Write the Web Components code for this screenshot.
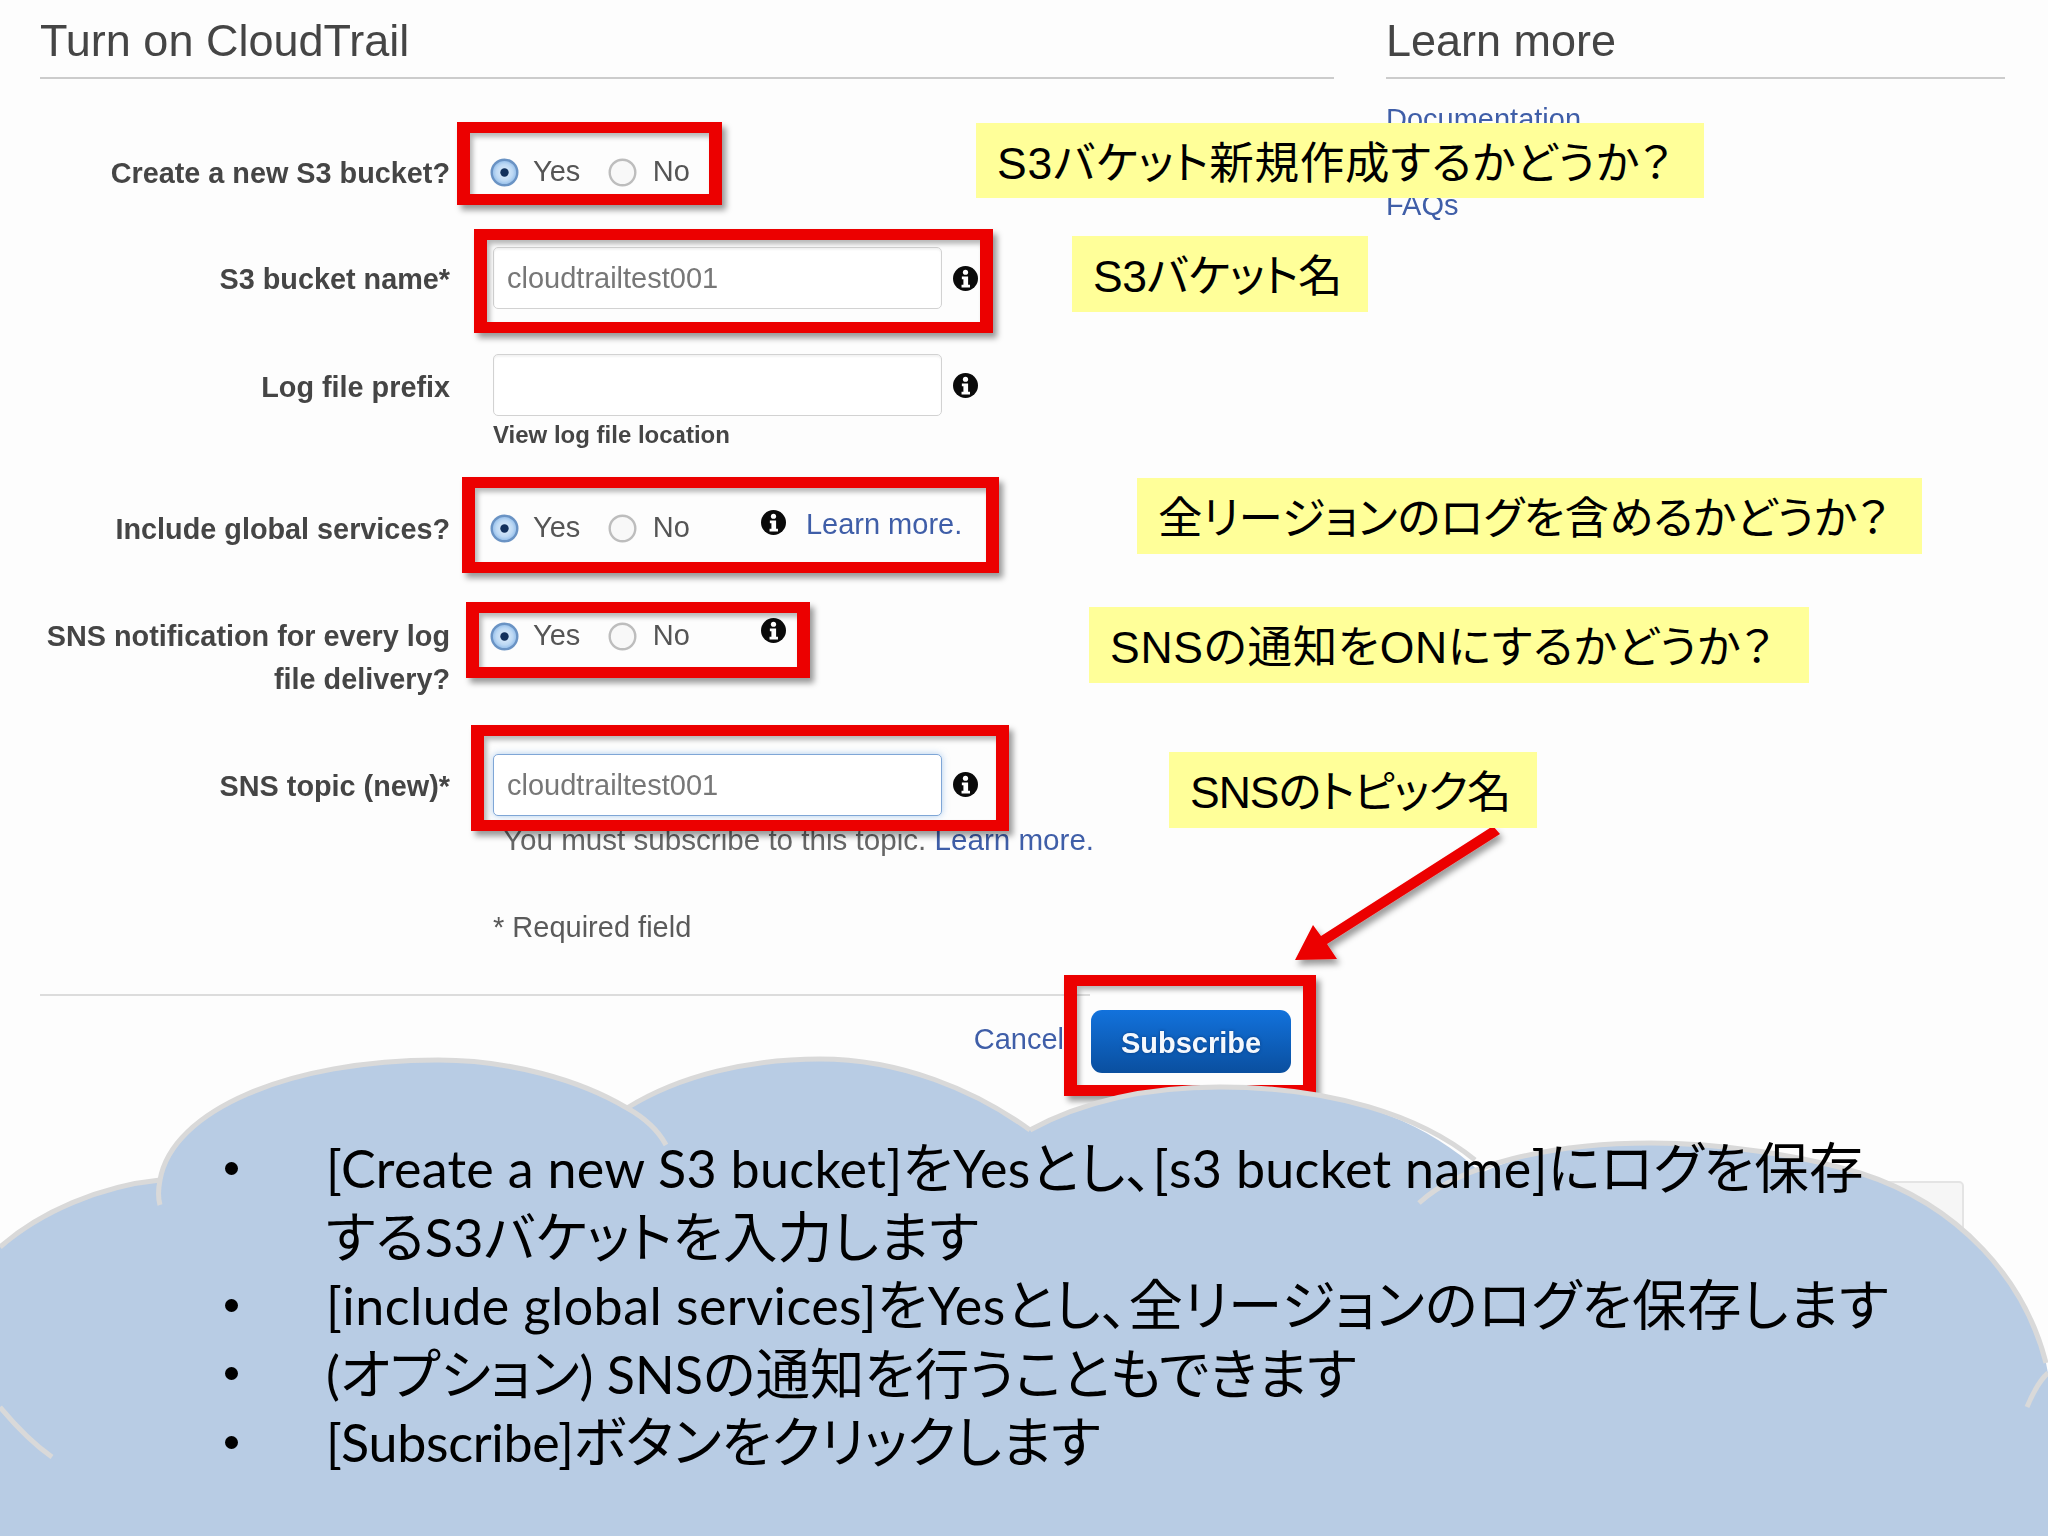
<!DOCTYPE html>
<html lang="ja">
<head>
<meta charset="utf-8">
<title>Turn on CloudTrail</title>
<style>
  html, body { margin: 0; padding: 0; background: #fdfdfd; }
</style>
</head>
<body>
<slide-page>
  <ct-panel slot="main" heading="Turn on CloudTrail">
    <ct-field label="Create a new S3 bucket?" style="margin-top:72px">
      <ct-radios></ct-radios>
    </ct-field>
    <ct-field label="S3 bucket name*" label-pad="9.5" style="margin-top:53px">
      <ct-input value="cloudtrailtest001"></ct-input>
    </ct-field>
    <ct-field label="Log file prefix" label-pad="10.5" style="margin-top:45px">
      <ct-input></ct-input>
      <ct-hint strong>View log file location</ct-hint>
    </ct-field>
    <ct-field label="Include global services?" style="margin-top:57px">
      <ct-radios info link="Learn more."></ct-radios>
    </ct-field>
    <ct-field label="SNS notification for every log file delivery?" label-pad="1" style="margin-top:63px">
      <ct-radios info style="margin-top:2px"></ct-radios>
    </ct-field>
    <ct-field label="SNS topic (new)*" label-pad="10.5" style="margin-top:54.5px">
      <ct-input value="cloudtrailtest001" focused></ct-input>
      <ct-hint indent link="Learn more.">You must subscribe to this topic. </ct-hint>
    </ct-field>
    <ct-field style="margin-top:44.5px">
      <ct-hint plain>* Required field</ct-hint>
    </ct-field>
    <ct-actions></ct-actions>
  </ct-panel>

  <ct-panel slot="side" heading="Learn more">
    <ct-sidebar></ct-sidebar>
  </ct-panel>

  <!-- annotations drawn over the screenshot -->
  <red-box x="457" y="122" w="265" h="83"></red-box>
  <red-box x="474" y="229" w="519" h="104"></red-box>
  <red-box x="462" y="477" w="537" h="96"></red-box>
  <red-box x="466" y="602" w="344" h="76"></red-box>
  <red-box x="471" y="725" w="538" h="106"></red-box>
  <red-box x="1064" y="975" w="252" h="121"></red-box>
  <red-arrow></red-arrow>

  <yellow-note x="976" y="123" w="728" h="75" style="letter-spacing:.8px">S3バケット新規作成するかどうか？</yellow-note>
  <yellow-note x="1072" y="236" w="296" h="76" style="letter-spacing:-.4px">S3バケット名</yellow-note>
  <yellow-note x="1137" y="478" w="785" h="76" style="letter-spacing:-.1px">全リージョンのログを含めるかどうか？</yellow-note>
  <yellow-note x="1089" y="607" w="720" h="76" style="letter-spacing:.75px">SNSの通知をONにするかどうか？</yellow-note>
  <yellow-note x="1169" y="752" w="368" h="76" style="letter-spacing:-1px">SNSのトピック名</yellow-note>

  <note-cloud></note-cloud>
</slide-page>

<script>
class SlidePage extends HTMLElement {
  connectedCallback() {
    const root = this.attachShadow({ mode: 'open' });
    root.innerHTML = `
      <style>
        :host {
          display: block;
          position: relative;
          width: 2048px;
          height: 1536px;
          overflow: hidden;
          background: #fdfdfd;
          color: #444;
          font: 29px/43px "Liberation Sans", "Noto Sans CJK JP", sans-serif;
        }
        .columns {
          display: grid;
          grid-template-columns: 1294px 619px;
          column-gap: 52px;
          padding-left: 40px;
        }
      </style>
      <div class="columns">
        <slot name="main"></slot>
        <slot name="side"></slot>
      </div>
      <slot></slot>
    `;
  }
}

class CtPanel extends HTMLElement {
  connectedCallback() {
    const root = this.attachShadow({ mode: 'open' });
    root.innerHTML = `
      <style>
        :host { display: block; filter: blur(.75px); }
        h2 {
          margin: 0;
          padding: 11px 0 6px;
          font: 400 45px/60px "Liberation Sans", sans-serif;
          color: #454545;
          border-bottom: 2px solid #ccc;
        }
      </style>
      <h2>${this.getAttribute('heading')}</h2>
      <slot></slot>
    `;
  }
}

class CtField extends HTMLElement {
  connectedCallback() {
    const root = this.attachShadow({ mode: 'open' });
    const pad = Number(this.getAttribute('label-pad') || 0) + 1;
    root.innerHTML = `
      <style>
        :host {
          display: grid;
          grid-template-columns: 410px 1fr;
          column-gap: 43px;
        }
        .label {
          padding-top: ${pad}px;
          margin-bottom: -2px;
          text-align: right;
          font-size: 28.8px;
          font-weight: 700;
          color: #454545;
        }
        .label span { display: block; }
      </style>
      <div class="label">${this.labelLines()}</div>
      <div><slot></slot></div>
    `;
  }
  // the long label breaks where the screenshot breaks it
  labelLines() {
    const text = this.getAttribute('label') || '';
    const cut = text.indexOf(' file delivery');
    if (cut < 0) return text;
    return `<span>${text.slice(0, cut)}</span><span>${text.slice(cut + 1)}</span>`;
  }
}

class InfoIcon extends HTMLElement {
  connectedCallback() {
    const root = this.attachShadow({ mode: 'open' });
    root.innerHTML = `
      <style>
        :host { display: block; width: 25px; height: 25px; flex: none; }
        svg { display: block; }
      </style>
      <svg width="25" height="25" viewBox="0 0 24 24">
        <circle cx="12" cy="12" r="12" fill="#0a0a0a"/>
        <circle cx="12" cy="6" r="2.5" fill="#fff"/>
        <path d="M8.5 10h6v8h1.8v2.6H8.2V18H10v-5.4H8.5z" fill="#fff"/>
      </svg>
    `;
  }
}
customElements.define('info-icon', InfoIcon);

class CtRadios extends HTMLElement {
  radio(checked) {
    if (checked) {
      return `<svg width="29" height="29" viewBox="0 0 29 29">
        <defs><radialGradient id="on" cx=".5" cy=".5" r=".55">
          <stop offset="0" stop-color="#e4f0fc"/><stop offset=".6" stop-color="#bcd8f4"/><stop offset="1" stop-color="#7fb0e4"/>
        </radialGradient></defs>
        <circle cx="14.5" cy="14.5" r="12.8" fill="url(#on)" stroke="#6a93c4" stroke-width="2.4"/>
        <circle cx="14.5" cy="14.5" r="4.2" fill="#12305c"/>
      </svg>`;
    }
    return `<svg width="29" height="29" viewBox="0 0 29 29">
      <circle cx="14.5" cy="14.5" r="12.8" fill="#f8f8f8" stroke="#bdbdbd" stroke-width="2.4"/>
    </svg>`;
  }
  connectedCallback() {
    const root = this.attachShadow({ mode: 'open' });
    const info = this.hasAttribute('info');
    const link = this.getAttribute('link');
    root.innerHTML = `
      <style>
        :host {
          display: flex;
          align-items: center;
          height: 43px;
          margin-left: -3px;
          color: #555;
        }
        svg { display: block; flex: none; }
        .txt { margin: 0 0 2px 14px; }
        .txt.n { margin-left: 15.5px; }
        .no { margin-left: 28px; }
        info-icon { margin: 0 0 12px 71px; }
        a { margin: 0 0 8px 20px; color: #3f5ea8; text-decoration: none; }
      </style>
      ${this.radio(true)}<span class="txt">Yes</span>
      <span class="no">${this.radio(false)}</span><span class="txt n">No</span>
      ${info ? '<info-icon></info-icon>' : ''}
      ${link ? `<a>${link}</a>` : ''}
    `;
  }
}

class CtInput extends HTMLElement {
  connectedCallback() {
    const root = this.attachShadow({ mode: 'open' });
    const focused = this.hasAttribute('focused');
    root.innerHTML = `
      <style>
        :host { display: flex; align-items: center; gap: 11px; }
        .box {
          box-sizing: border-box;
          width: 449px;
          height: 62px;
          padding-left: 13px;
          line-height: 60px;
          color: #777;
          background: #fff;
          border-radius: 5px;
          border: 1.5px solid ${focused ? '#7fa6d6' : '#d2d2d2'};
          box-shadow: ${focused ? '0 0 7px rgba(110,165,225,.55)' : 'inset 0 2px 2px rgba(0,0,0,.05)'};
        }
      </style>
      <div class="box">${this.getAttribute('value') || ''}</div>
      <info-icon></info-icon>
    `;
  }
}

class CtHint extends HTMLElement {
  connectedCallback() {
    const strong = this.hasAttribute('strong');
    const link = this.getAttribute('link');
    const root = this.attachShadow({ mode: 'open' });
    root.innerHTML = `
      <style>
        :host {
          display: block;
          ${strong ? 'margin-top:4px;font-size:24px;line-height:30px;font-weight:700;color:#454545;' : ''}
          ${this.hasAttribute('indent') ? 'margin-top:2.5px;padding-left:10px;font-size:29.6px;color:#666;white-space:nowrap;' : ''}
          ${this.hasAttribute('plain') ? 'color:#5a5a5a;' : ''}
        }
        a { color: #3f5ea8; text-decoration: none; }
      </style>
      <slot></slot>${link ? `<a>${link}</a>` : ''}
    `;
  }
}

class CtActions extends HTMLElement {
  connectedCallback() {
    const root = this.attachShadow({ mode: 'open' });
    root.innerHTML = `
      <style>
        :host { display: block; margin-top: 45.5px; }
        hr { width: 1050px; margin: 0; border: 0; border-top: 2px solid #dcdcdc; }
        .row {
          display: flex;
          justify-content: flex-end;
          align-items: flex-start;
          gap: 27px;
          margin-top: 14px;
          padding-right: 43px;
        }
        a { margin-top: 7.5px; color: #3f5ea8; }
        button {
          width: 200px;
          height: 63px;
          padding: 3px 0 0;
          border: 0;
          border-radius: 11px;
          color: #f4f8fd;
          font: 700 29px "Liberation Sans", sans-serif;
          text-shadow: 0 0 3px rgba(0,30,80,.6);
          background: linear-gradient(#1272dc, #0a4f9f);
        }
      </style>
      <hr>
      <div class="row"><a>Cancel</a><button>Subscribe</button></div>
    `;
  }
}

class CtSidebar extends HTMLElement {
  connectedCallback() {
    const root = this.attachShadow({ mode: 'open' });
    root.innerHTML = `
      <style>
        :host { display: block; padding: 18.5px 0 0 0; color: #3f5ea8; }
        .faq { margin-top: 43px; }
        .ghost {
          box-sizing: border-box;
          width: 90px;
          height: 60px;
          margin: 954px 0 0 488px;
          background: #f6f6f6;
          border: 2px solid #e4e4e4;
          border-radius: 5px;
        }
      </style>
      <div>Documentation</div>
      <div class="faq">FAQs</div>
      <div class="ghost"></div>
    `;
  }
}

class RedBox extends HTMLElement {
  connectedCallback() {
    const root = this.attachShadow({ mode: 'open' });
    const g = (n) => this.getAttribute(n);
    root.innerHTML = `
      <style>
        :host {
          position: absolute;
          left: ${g('x')}px;
          top: ${g('y')}px;
          width: ${g('w')}px;
          height: ${g('h')}px;
          box-sizing: border-box;
          border: solid #ec0000;
          border-width: 11px 13px;
          box-shadow: 4px 5px 6px rgba(0,0,0,.4), inset 3px 4px 5px rgba(0,0,0,.28);
        }
      </style>
    `;
  }
}

class RedArrow extends HTMLElement {
  connectedCallback() {
    const root = this.attachShadow({ mode: 'open' });
    root.innerHTML = `
      <style>
        :host { position: absolute; left: 1280px; top: 820px; width: 230px; height: 155px; }
        svg { display: block; overflow: visible; }
      </style>
      <svg width="230" height="155" viewBox="1280 820 230 155">
        <defs><filter id="s" x="-20%" y="-20%" width="140%" height="140%">
          <feDropShadow dx="3" dy="5" stdDeviation="3" flood-color="#000" flood-opacity=".4"/>
        </filter></defs>
        <path filter="url(#s)" fill="#ec0000"
          d="M1493 826L1500 834L1327 944L1337 959L1295 960L1313 925L1321 936Z"/>
      </svg>
    `;
  }
}

class YellowNote extends HTMLElement {
  connectedCallback() {
    const root = this.attachShadow({ mode: 'open' });
    const g = (n) => this.getAttribute(n);
    root.innerHTML = `
      <style>
        :host {
          position: absolute;
          left: ${g('x')}px;
          top: ${g('y')}px;
          width: ${g('w')}px;
          height: ${g('h')}px;
          box-sizing: border-box;
          padding-left: 21px;
          background: #ffff99;
          color: #000;
          font: 44.5px/81px "Liberation Sans", "Noto Sans CJK JP", sans-serif;
          font-feature-settings: "palt";
          white-space: nowrap;
        }
      </style>
      <slot></slot>
    `;
  }
}

class NoteCloud extends HTMLElement {
  connectedCallback() {
    const root = this.attachShadow({ mode: 'open' });
    root.innerHTML = `
      <style>
        :host {
          position: absolute;
          left: 0;
          top: 1050px;
          width: 2048px;
          height: 486px;
          color: #000;
          font: 54.5px/68.5px "Noto Sans CJK JP", sans-serif;
          font-feature-settings: "palt";
        }
        svg { position: absolute; left: 0; top: 0; }
        ul { position: relative; margin: 0; padding: 81px 0 0 225px; list-style: none; }
        li { display: flex; white-space: nowrap; }
        li::before {
          content: "";
          flex: none;
          width: 13px;
          height: 13px;
          margin: 30.5px 88px 0 0;
          border-radius: 50%;
          background: #000;
        }
        .la { font-family: "Lato", sans-serif; font-size: 52px; line-height: 0; }
      </style>
      <svg width="2048" height="486" viewBox="0 1050 2048 486">
        <path fill="#b8cce4" d="M0 1247C40 1212 100 1186 160 1180C172 1110 290 1060 438 1060C510 1060 580 1080 627 1108
          C680 1075 750 1059 820 1059C900 1059 975 1090 1030 1130C1085 1100 1150 1087 1220 1087C1330 1087 1420 1115 1481 1173
          C1530 1150 1590 1143 1651 1143C1720 1143 1800 1155 1860 1173C1960 1205 2025 1280 2046 1363L2048 1373V1536H0Z"/>
        <g fill="none" stroke="#d9d9d9" stroke-width="5">
          <path d="M0 1247C40 1212 100 1186 160 1180"/>
          <path d="M160 1205C158 1198 158 1190 160 1180C172 1110 290 1060 438 1060C510 1060 580 1080 627 1108C645 1118 658 1130 666 1145"/>
          <path d="M627 1108C680 1075 750 1059 820 1059C900 1059 975 1090 1030 1130"/>
          <path d="M1030 1130C1085 1100 1150 1087 1220 1087C1330 1087 1420 1115 1475 1160"/>
          <path d="M1419 1203C1460 1165 1550 1143 1651 1143C1720 1143 1800 1155 1860 1173C1960 1205 2025 1280 2046 1363"/>
          <path d="M2027 1407C2032 1395 2040 1380 2048 1373"/>
          <path d="M0 1407C15 1425 35 1445 52 1457"/>
        </g>
      </svg>
      <ul>
        <li style="letter-spacing:.3px"><div><span class="la">[Create a new S3 bucket]</span>を<span class="la">Yes</span>とし、<span class="la">[s3 bucket name]</span>にログを保存<br>する<span class="la">S3</span>バケットを入力します</div></li>
        <li style="letter-spacing:.45px"><div><span class="la">[include global services]</span>を<span class="la">Yes</span>とし、全リージョンのログを保存します</div></li>
        <li><div><span class="la">(</span>オプション<span class="la">) SNS</span>の通知を行うこともできます</div></li>
        <li style="letter-spacing:-.3px"><div><span class="la">[Subscribe]</span>ボタンをクリックします</div></li>
      </ul>
    `;
  }
}

customElements.define('slide-page', SlidePage);
customElements.define('ct-panel', CtPanel);
customElements.define('ct-field', CtField);
customElements.define('ct-radios', CtRadios);
customElements.define('ct-input', CtInput);
customElements.define('ct-hint', CtHint);
customElements.define('ct-actions', CtActions);
customElements.define('ct-sidebar', CtSidebar);
customElements.define('red-box', RedBox);
customElements.define('red-arrow', RedArrow);
customElements.define('yellow-note', YellowNote);
customElements.define('note-cloud', NoteCloud);
</script>
</body>
</html>
